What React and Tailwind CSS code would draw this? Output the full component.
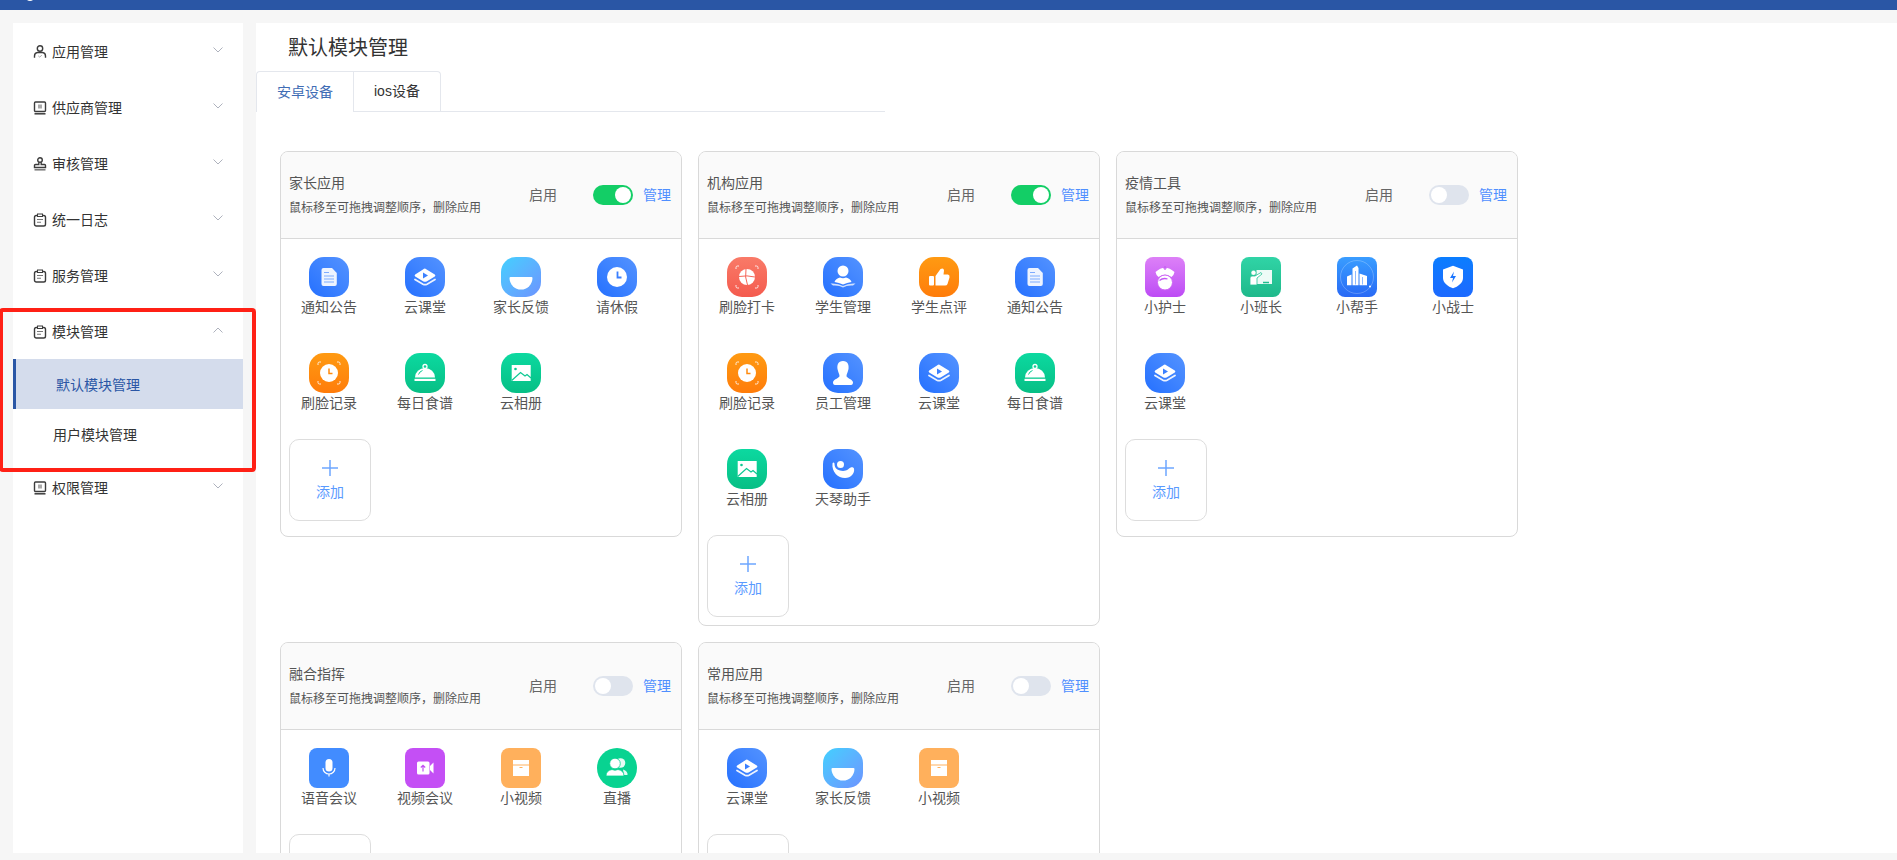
import React from 'react';

const bgBlue = 'rounded-[15px] bg-gradient-to-tr from-[#2470ff] to-[#5493ff]';
const bgOrange = 'rounded-[15px] bg-gradient-to-b from-[#ff9a12] to-[#ff7c0a]';
const bgGreen = 'rounded-[15px] bg-gradient-to-b from-[#0cd9a0] to-[#07bf85]';
const bgRed = 'rounded-[15px] bg-gradient-to-b from-[#f97a68] to-[#f45a4e]';
const bgSky = 'rounded-[15px] bg-gradient-to-br from-[#3fd0ff] to-[#6b93ff]';

const Corners = () => (
  <g fill="none" stroke="#fff" strokeWidth="1" opacity="0.85">
    <path d="M9 12V10.500Q9 9 10.500 9H12" />
    <path d="M28 9H29.500Q31 9 31 10.500V12" />
    <path d="M9 28V29.500Q9 31 10.500 31H12" />
    <path d="M28 31H29.500Q31 31 31 29.500V28" />
  </g>
);

const glyphs = {
  doc: (
    <>
      <path d="M14.500 11H23L27.800 16V27a2 2 0 0 1-2 2H14.500a2 2 0 0 1-2-2V13a2 2 0 0 1 2-2Z" fill="#eef4ff" />
      <path d="M15 15.500H20M15 19H25M15 22H25M15 25H25" stroke="#7dabff" strokeWidth="1.200" />
    </>
  ),
  eye: (
    <>
      <path d="M20 11.500 29.800 17.500Q31 18.500 29.800 19.500L22 24.300Q20 25.300 18 24.300L10.200 19.500Q9 18.500 10.200 17.500L18 12.500Q19 11.500 20 11.500Z" fill="#fff" />
      <path d="M18 15.500V21.500L23 18.500Z" fill="#3b80ff" />
      <path d="M10 22.500 18 27.200Q20 28.200 22 27.200L30 22.500" fill="none" stroke="#fff" strokeWidth="1.800" strokeLinecap="round" opacity="0.9" />
    </>
  ),
  smile: <path d="M9.500 20H30.500A1 1 0 0 1 31.500 21A11.500 11.500 0 0 1 8.500 21A1 1 0 0 1 9.500 20Z" fill="#fff" />,
  clock: (
    <>
      <circle cx="20" cy="20" r="10" fill="#fff" />
      <path d="M20.500 14.500V20.500H24.500" fill="none" stroke="#3a7fff" strokeWidth="1.800" />
    </>
  ),
  clockScan: (
    <>
      <Corners />
      <circle cx="20" cy="20" r="9" fill="#fff" />
      <path d="M20 15.500V20.500H23.500" fill="none" stroke="#ff8a0e" strokeWidth="1.500" />
    </>
  ),
  dish: (
    <>
      <circle cx="20" cy="13.500" r="2" fill="none" stroke="#fff" strokeWidth="1.300" />
      <path d="M10 24.500A10 9.500 0 0 1 30 24.500Z" fill="#fff" />
      <path d="M13.500 21.500Q14.500 18.500 17.500 17.500" fill="none" stroke="#0ccb94" strokeWidth="1" />
      <rect x="9.500" y="25.800" width="21" height="2.200" fill="#fff" />
    </>
  ),
  photo: (
    <>
      <rect x="10.700" y="12" width="19" height="16" fill="#fff" />
      <circle cx="14.500" cy="16" r="1.300" fill="#0cc892" />
      <path d="M10.700 27.500 19.500 19.500 24 23 26 21.500 30 25" fill="none" stroke="#0cc892" strokeWidth="1.200" />
    </>
  ),
  faceScan: (
    <>
      <Corners />
      <circle cx="20" cy="20" r="8" fill="#fff" />
      <path d="M19 12Q17.500 20 20.500 28M12 19.500Q20 18 28 20" fill="none" stroke="#f66659" strokeWidth="1" />
    </>
  ),
  student: (
    <>
      <circle cx="20" cy="14" r="5.500" fill="#fff" />
      <path d="M11.500 25Q12.500 21.500 17 20.500Q20 22 23 20.500Q27.500 21.500 28.500 25Q24 25.500 20 27.500Q16 25.500 11.500 25Z" fill="#fff" />
      <path d="M7.500 26.500Q15 26 20 29Q25 26 32.500 26.500L30 28.500Q24 28 20 30.500Q16 28 10 28.500Z" fill="#cfe0ff" />
    </>
  ),
  thumb: (
    <>
      <rect x="10" y="19" width="5" height="9.500" rx="1" fill="#fff" />
      <path d="M16.500 19 21.500 12Q24.800 10.500 25 13.500L24.500 17.500H29Q31 17.800 30.500 20.500L28.500 27Q28 28.500 26 28.500H16.500Z" fill="#fff" />
    </>
  ),
  staff: (
    <path d="M20 8C25 8 26 12 25.500 16 25 19 23.500 21 23.500 23 23.500 25 29 26 30 29 30 31 29.500 32 28 32H12C10.500 32 10 31 10 29 11 26 16.500 25 16.500 23 16.500 21 15 19 14.500 16 14 12 15 8 20 8Z" fill="#fff" />
  ),
  tianqin: (
    <>
      <path d="M9.500 14.500C8.500 23 15 29 22 29 28 29 32 24 31 19.500 30 17.500 27.500 18 25.500 20 22.500 22.500 19 22 17 21.500 13 20.500 11.500 18 11.500 14.500 11 13 9.800 13 9.500 14.500Z" fill="#fff" />
      <circle cx="17.500" cy="15.500" r="3.500" fill="#fff" />
    </>
  ),
  nurse: (
    <>
      <path d="M10.500 15Q20 6.500 29.500 15 29 18 26.500 20 20 15.500 13.500 20 11 18 10.500 15Z" fill="#fff" />
      <path d="M20 9V13M18.200 11H21.800" stroke="#c558f5" strokeWidth="1.200" />
      <circle cx="20" cy="25.500" r="7.500" fill="#fff" stroke="#cc62f5" strokeWidth="1" />
      <path d="M14.500 23.500Q18 20.500 22.500 22" fill="none" stroke="#c558f5" strokeWidth="1.300" />
    </>
  ),
  teach: (
    <>
      <path d="M15.500 13H31V27H15.500Z" fill="#fff" opacity="0.92" />
      <path d="M22 25.500H28" stroke="#22bd8f" strokeWidth="1.500" />
      <circle cx="12.500" cy="15.800" r="2.500" fill="#fff" stroke="#26c497" strokeWidth="0.500" />
      <path d="M9 21Q9 19 11 19H14L20 15.500 21 17 16 21V28H9Z" fill="#fff" stroke="#26c497" strokeWidth="0.800" />
    </>
  ),
  building: (
    <>
      <circle cx="20" cy="20" r="16.500" fill="none" stroke="#fff" strokeWidth="0.800" opacity="0.3" />
      <path d="M10 19.500 14.500 17.500V28.300H10ZM15.500 11.500 20 8.500 21.500 11V28.300H15.500ZM22.500 16.500 30 19V28.300H22.500Z" fill="#fff" />
      <path d="M18.500 14V27.500M25.500 20V27.500" stroke="#8dbaff" strokeWidth="1" />
      <circle cx="33" cy="29.500" r="1" fill="#fff" />
    </>
  ),
  shield: (
    <>
      <path d="M20 8.700 30 12.500V21C30 26 25 29.500 20 31.300 15 29.500 10 26 10 21V12.500Z" fill="#fff" />
      <path d="M21 14.500 17 21H20L19 25.500 23 19H20Z" fill="#1a75ff" />
    </>
  ),
  mic: (
    <>
      <rect x="16.500" y="11" width="7" height="12.500" rx="3.500" fill="#fff" />
      <path d="M14 20A6 6 0 0 0 26 20M20 26V28.500" fill="none" stroke="#fff" strokeWidth="1.200" />
    </>
  ),
  video: (
    <>
      <rect x="12" y="13.500" width="12.500" height="13" rx="1.500" fill="#fff" />
      <path d="M25 18 28.500 14.500V25.500L25 22Z" fill="#fff" />
      <path d="M18 23.500V17.500M15.800 19.500 18 17.300 20.200 19.500" fill="none" stroke="#c44ff5" strokeWidth="1.200" />
    </>
  ),
  box: (
    <>
      <rect x="12" y="12" width="16" height="4.500" fill="#fff" />
      <rect x="12" y="17.500" width="16" height="10.500" fill="#fff" />
      <path d="M18.500 19.500H21.500" stroke="#ffb05c" strokeWidth="1" />
    </>
  ),
  people: (
    <>
      <circle cx="23.500" cy="15" r="4.800" fill="#fff" opacity="0.9" />
      <path d="M26 21.500Q31 23 30.500 27H27Z" fill="#fff" opacity="0.9" />
      <circle cx="18" cy="15.500" r="5.300" fill="#fff" stroke="#08d391" strokeWidth="0.800" />
      <path d="M9 28Q9 22.500 15 21.500Q18 23 21 21.500Q27 22.500 27 28Z" fill="#fff" stroke="#08d391" strokeWidth="0.800" />
    </>
  ),
};

const apps = {
  notice: ['通知公告', bgBlue, 'doc'],
  course: ['云课堂', bgBlue, 'eye'],
  feedback: ['家长反馈', bgSky, 'smile'],
  leave: ['请休假', bgBlue, 'clock'],
  faceLog: ['刷脸记录', bgOrange, 'clockScan'],
  menu: ['每日食谱', bgGreen, 'dish'],
  album: ['云相册', bgGreen, 'photo'],
  faceCard: ['刷脸打卡', bgRed, 'faceScan'],
  students: ['学生管理', bgBlue, 'student'],
  review: ['学生点评', bgOrange, 'thumb'],
  staff: ['员工管理', bgBlue, 'staff'],
  tianqin: ['天琴助手', bgBlue, 'tianqin'],
  nurse: ['小护士', 'rounded-[8px] bg-gradient-to-b from-[#dd80f7] to-[#bd4af5]', 'nurse'],
  monitor: ['小班长', 'rounded-[8px] bg-gradient-to-b from-[#30d4a6] to-[#1fb98b]', 'teach'],
  helper: ['小帮手', 'rounded-[8px] bg-gradient-to-b from-[#3a9dff] to-[#2a69f5]', 'building'],
  guard: ['小战士', 'rounded-[8px] bg-gradient-to-b from-[#0a7dff] to-[#1c69ff]', 'shield'],
  voice: ['语音会议', 'rounded-[8px] bg-[#428cff]', 'mic'],
  meeting: ['视频会议', 'rounded-[8px] bg-[#c44ff5]', 'video'],
  shortVideo: ['小视频', 'rounded-[8px] bg-[#ffb05c]', 'box'],
  live: ['直播', 'rounded-full bg-[#08d391]', 'people'],
};

const row1 = [
  { title: '家长应用', on: true, pad: 'pb-[15px]', items: ['notice', 'course', 'feedback', 'leave', 'faceLog', 'menu', 'album'] },
  { title: '机构应用', on: true, pad: 'pb-[8px]', items: ['faceCard', 'students', 'review', 'notice', 'faceLog', 'staff', 'course', 'menu', 'album', 'tianqin'] },
  { title: '疫情工具', on: false, pad: 'pb-[15px]', items: ['nurse', 'monitor', 'helper', 'guard', 'course'] },
];
const row2 = [
  { title: '融合指挥', on: false, pad: 'pb-[15px]', items: ['voice', 'meeting', 'shortVideo', 'live'] },
  { title: '常用应用', on: false, pad: 'pb-[15px]', items: ['course', 'feedback', 'shortVideo'] },
];

function MenuIcon({ type }) {
  return (
    <svg width="14" height="14" viewBox="0 0 14 14" fill="none" stroke="#3c3c3c" strokeWidth="1.400" className="shrink-0">
      {type === 'person' && (
        <>
          <circle cx="7" cy="3.500" r="2.700" />
          <path d="M1.500 12.800V11Q1.500 7.800 4.500 7.500H9.500Q12.500 7.800 12.500 11V12.800" />
          <path d="M5.200 10.800 6.800 12.200 8.800 10" stroke="#999" strokeWidth="0.800" />
        </>
      )}
      {type === 'monitor' && (
        <>
          <rect x="1.500" y="1" width="11" height="9.500" rx="1" />
          <rect x="5" y="3.500" width="4" height="4" fill="#aaa" stroke="none" />
          <path d="M1.500 12.800H12.500" strokeWidth="1.500" />
        </>
      )}
      {type === 'stamp' && (
        <>
          <circle cx="7" cy="3" r="2.300" />
          <path d="M5.800 5.200V7.500H2.500Q1.500 7.500 1.500 8.500V10.500H12.500V8.500Q12.500 7.500 11.500 7.500H8.200V5.200" />
          <path d="M1.500 12.800H12.500" strokeWidth="1.500" stroke="#777" />
        </>
      )}
      {type === 'clip' && (
        <>
          <rect x="1.500" y="2.500" width="11" height="10.500" rx="1.800" />
          <rect x="4.500" y="1" width="5" height="2.500" fill="#fff" strokeWidth="1" />
          <path d="M4 6.500H10M4 9.300H8" stroke="#777" strokeWidth="1.100" />
        </>
      )}
    </svg>
  );
}

function Chevron({ up }) {
  return (
    <svg width="10" height="6" viewBox="0 0 10 6" fill="none" stroke="#aeb2bd" strokeWidth="1" className="ml-auto mr-[20px] mb-[5px]">
      <path d={up ? 'M0.500 5.500 5 1 9.500 5.500' : 'M0.500 0.500 5 5 9.500 0.500'} />
    </svg>
  );
}

function MenuRow({ icon, label, up, h = 'h-[56px]' }) {
  return (
    <div className={`flex ${h} items-center pl-[20px] text-[14px] text-[#333]`}>
      <MenuIcon type={icon} />
      <span className="ml-[5px]">{label}</span>
      <Chevron up={up} />
    </div>
  );
}

function Sidebar() {
  return (
    <aside className="w-[230px] shrink-0 bg-white pt-px">
      <MenuRow icon="person" label="应用管理" />
      <MenuRow icon="monitor" label="供应商管理" />
      <MenuRow icon="stamp" label="审核管理" />
      <MenuRow icon="clip" label="统一日志" />
      <MenuRow icon="clip" label="服务管理" />
      <MenuRow icon="clip" label="模块管理" up h="h-[55px] pt-[1px]" />
      <div className="flex h-[50px] items-center border-l-[3px] border-[#2a56a5] bg-[#d4dcec] pl-[40px] pt-[2px] text-[14px] text-[#2a56a5]">默认模块管理</div>
      <div className="flex h-[51px] items-center pl-[40px] pt-[1px] text-[14px] text-[#333]">用户模块管理</div>
      <MenuRow icon="monitor" label="权限管理" />
    </aside>
  );
}

function Toggle({ on }) {
  return (
    <div className={`ml-[36px] flex h-[20px] w-[40px] shrink-0 items-center rounded-full px-[2px] ${on ? 'justify-end bg-[#13ce66]' : 'justify-start bg-[#dfe4ed]'}`}>
      <div className="h-[16px] w-[16px] rounded-full bg-white" />
    </div>
  );
}

function AppItem({ id }) {
  const [label, bg, glyph] = apps[id];
  return (
    <div className="flex h-[86px] w-[96px] flex-col items-center">
      <div className={`h-[40px] w-[40px] ${bg}`}>
        <svg width="40" height="40" viewBox="0 0 40 40">{glyphs[glyph]}</svg>
      </div>
      <div className="whitespace-nowrap text-[14px] leading-[20px] text-[#555]">{label}</div>
    </div>
  );
}

function AddTile() {
  return (
    <div className="ml-[8px] flex h-[82px] w-[82px] flex-col items-center rounded-[10px] border border-[#ddd] pt-[20px]">
      <svg width="16" height="16" viewBox="0 0 16 16" stroke="#6da6ff" strokeWidth="1.500">
        <path d="M8 0V16M0 8H16" />
      </svg>
      <div className="mt-[6px] text-[14px] leading-[20px] text-[#5a9aff]">添加</div>
    </div>
  );
}

function ModuleCard({ title, on, pad, items }) {
  return (
    <div className="w-[402px] overflow-hidden rounded-[8px] border border-[#d9d9d9] bg-white">
      <div className="flex h-[87px] items-center border-b border-[#d9d9d9] bg-[#fafafa] pl-[8px] pr-[10px]">
        <div className="flex-1">
          <div className="text-[14px] leading-[20px] text-[#555]">{title}</div>
          <div className="mt-[6px] text-[12px] leading-[18px] text-[#555]">鼠标移至可拖拽调整顺序，删除应用</div>
        </div>
        <span className="text-[14px] text-[#666]">启用</span>
        <Toggle on={on} />
        <span className="ml-[10px] text-[14px] text-[#4f8fff]">管理</span>
      </div>
      <div className={`pt-[18px] ${pad}`}>
        <div className="flex flex-wrap gap-y-[10px]">
          {items.map((id, i) => <AppItem key={i} id={id} />)}
        </div>
        <AddTile />
      </div>
    </div>
  );
}

export default function App() {
  return (
    <div className="relative flex h-screen flex-col overflow-hidden bg-[#f6f6f6] [font-family:'Liberation_Sans','Noto_Sans_CJK_SC',sans-serif]">
      <header className="relative h-[10px] shrink-0 overflow-hidden bg-[#2a56a5]">
        <div className="absolute -top-[9px] left-[25px] h-[10px] w-[10px] rounded-full bg-white" />
      </header>
      <div className="flex min-h-0 flex-1 gap-[13px] pb-[7px] pl-[13px] pt-[13px]">
        <Sidebar />
        <main className="min-w-0 flex-1 overflow-hidden bg-white">
          <h1 className="flex h-[48px] items-center pl-[32px] pt-[2px] text-[20px] font-normal text-[#333]">默认模块管理</h1>
          <div className="flex h-[41px] w-[629px] border-b border-[#e4e7ed] text-[14px]">
            <div className="-mb-px flex h-[41px] w-[97px] items-center rounded-tl-[4px] border-l border-t border-[#e4e7ed] bg-white pl-[20px] text-[#3f6db5]">安卓设备</div>
            <div className="flex h-[40px] w-[88px] items-center rounded-tr-[4px] border-x border-t border-[#e4e7ed] pl-[20px] text-[#333]">ios设备</div>
          </div>
          <div className="pl-[24px] pt-[39px]">
            <div className="flex items-start gap-x-[16px]">
              {row1.map(c => <ModuleCard key={c.title} {...c} />)}
            </div>
            <div className="mt-[16px] flex items-start gap-x-[16px]">
              {row2.map(c => <ModuleCard key={c.title} {...c} />)}
            </div>
          </div>
        </main>
      </div>
      {/* annotation box drawn over the sidebar */}
      <div className="absolute -left-px top-[308px] h-[164px] w-[257px] rounded-[4px] border-[4px] border-[#ff2015]" />
    </div>
  );
}
